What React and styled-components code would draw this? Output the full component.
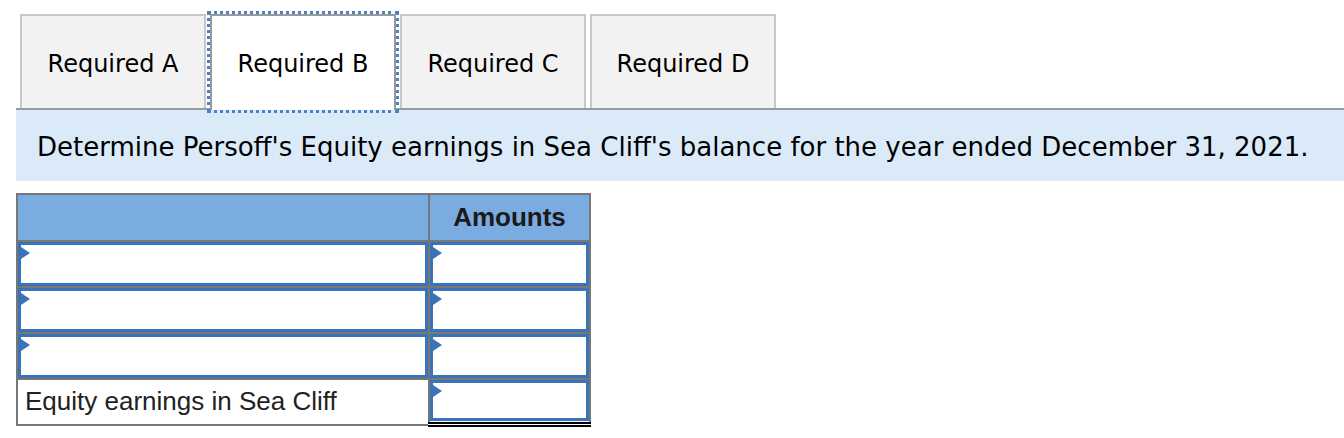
import React from "react";
import styled, { createGlobalStyle } from "styled-components";

const Global = createGlobalStyle`
  html, body { margin: 0; padding: 0; background: #fff; }
  body { font-family: "DejaVu Sans", Verdana, sans-serif; }
`;

const Page = styled.div`
  padding: 14px 0 0 16px;
`;

const TabList = styled.div`
  display: flex;
  gap: 4px;
  padding-left: 4px;
  border-bottom: 2px solid #999;
`;

const Tab = styled.div`
  box-sizing: border-box;
  width: 186px;
  height: ${(p) => (p.$active ? "96px" : "94px")};
  margin-bottom: ${(p) => (p.$active ? "-2px" : "0")};
  display: flex;
  align-items: center;
  justify-content: center;
  padding-top: 3px;
  padding-bottom: ${(p) => (p.$active ? "2px" : "0")};
  background: ${(p) => (p.$active ? "#fff" : "#f2f2f2")};
  border: 2px solid ${(p) => (p.$active ? "#999" : "#c8c8c8")};
  border-bottom: none;
  outline: ${(p) => (p.$active ? "3px dotted #4a80c8" : "none")};
  outline-offset: 0px;
  font-family: "DejaVu Sans", Verdana, sans-serif;
  font-size: 24px;
  color: #000;
  position: relative;
  z-index: ${(p) => (p.$active ? 1 : 0)};
`;

const Banner = styled.div`
  background: #dbeaf8;
  height: 71px;
  display: flex;
  align-items: center;
  padding-left: 21px;
  padding-top: 2px;
  box-sizing: border-box;
  font-family: "DejaVu Sans", Verdana, sans-serif;
  font-size: 26px;
  color: #000;
  white-space: nowrap;
`;

const Table = styled.table`
  margin-top: 12px;
  border-collapse: collapse;
  width: 575px;
  font-family: "Liberation Sans", Arial, sans-serif;
`;

const HeadCell = styled.th`
  background: #7aace1;
  border: 2px solid #777;
  height: 45px;
  padding: 0;
  font-size: 26px;
  font-weight: bold;
  color: #1a1a1a;
  text-align: center;
  width: ${(p) => p.$w || "auto"};
`;

const Cell = styled.td`
  border: 2px solid #777;
  padding: 0;
  height: ${(p) => (p.$double ? "42px" : "44px")};
  vertical-align: top;
  ${(p) => p.$topRule && "border-top: 2px solid #000;"}
  ${(p) => p.$double && "border-bottom: 5px double #000;"}
`;

const InputBox = styled.div`
  box-sizing: border-box;
  height: ${(p) => (p.$short ? "41px" : "44px")};
  border: 3px solid #3b73b9;
  background: #fff;
  position: relative;
`;

const Marker = styled.span`
  position: absolute;
  left: -3px;
  top: 0;
  width: 0;
  height: 0;
  border-left: 12px solid #3b73b9;
  border-top: 8px solid transparent;
  border-bottom: 8px solid transparent;
`;

const LabelCell = styled.td`
  border: 2px solid #777;
  padding: 0 0 0 7px;
  height: 42px;
  font-size: 26px;
  color: #222;
`;

const Input = ({ short }) => (
  <InputBox $short={short}>
    <Marker />
  </InputBox>
);

export default function App() {
  return (
    <Page>
      <Global />
      <TabList>
        <Tab>Required A</Tab>
        <Tab $active>Required B</Tab>
        <Tab>Required C</Tab>
        <Tab>Required D</Tab>
      </TabList>
      <Banner>
        Determine Persoff's Equity earnings in Sea Cliff's balance for the year ended December 31, 2021.
      </Banner>
      <Table>
        <thead>
          <tr>
            <HeadCell $w="410px"></HeadCell>
            <HeadCell>Amounts</HeadCell>
          </tr>
        </thead>
        <tbody>
          {[0, 1, 2].map((i) => (
            <tr key={i}>
              <Cell><Input /></Cell>
              <Cell><Input /></Cell>
            </tr>
          ))}
          <tr>
            <LabelCell>Equity earnings in Sea Cliff</LabelCell>
            <Cell $topRule $double><Input short /></Cell>
          </tr>
        </tbody>
      </Table>
    </Page>
  );
}
